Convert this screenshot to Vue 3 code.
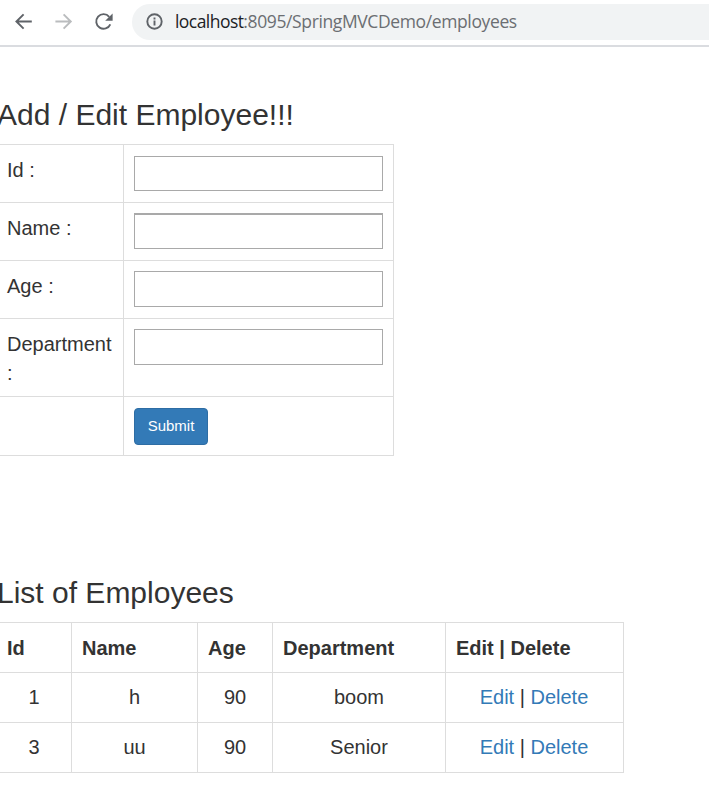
<script setup>
const fields = ['Id :', 'Name :', 'Age :', 'Department :']
const headers = ['Id', 'Name', 'Age', 'Department', 'Edit | Delete']
const employees = [
  { id: 1, name: 'h', age: 90, department: 'boom' },
  { id: 3, name: 'uu', age: 90, department: 'Senior' },
]
</script>

<template>
  <div class="window">
    <header class="toolbar">
      <svg class="nav" viewBox="0 0 24 24"><path d="M19.8 11.5H4.6M11.6 4.3 4.4 11.5l7.2 7.2" /></svg>
      <svg class="nav disabled" viewBox="0 0 24 24"><path d="M3.4 11.5h15.2M11.6 4.3l7.2 7.2-7.2 7.2" /></svg>
      <svg class="nav" viewBox="0 0 24 24">
        <path d="M17.2 6.8A7.3 7.3 0 1 0 18.3 14.3" />
        <path class="solid" d="M20.6 3.6v7.2h-7.4z" />
      </svg>
      <div class="address">
        <svg class="info" viewBox="0 0 18 18">
          <circle cx="8.5" cy="8.5" r="7.2" />
          <path d="M8.5 7.6v4.8M8.5 4.4v2" />
        </svg>
        <span class="url"><span class="host">localhost</span>:8095/SpringMVCDemo/employees</span>
      </div>
    </header>

    <main>
      <h3 class="form-title">Add / Edit Employee!!!</h3>
      <form class="form" @submit.prevent>
        <template v-for="label in fields" :key="label">
          <label class="cell">{{ label }}</label>
          <div class="cell"><input type="text" :aria-label="label" /></div>
        </template>
        <div class="cell"></div>
        <div class="cell"><button type="submit">Submit</button></div>
      </form>

      <h3 class="list-title">List of Employees</h3>
      <div class="list">
        <div v-for="h in headers" :key="h" class="item head">{{ h }}</div>
        <template v-for="e in employees" :key="e.id">
          <div class="item id">{{ e.id }}</div>
          <div class="item">{{ e.name }}</div>
          <div class="item">{{ e.age }}</div>
          <div class="item">{{ e.department }}</div>
          <div class="item actions"><a href="#">Edit</a>&nbsp;|&nbsp;<a href="#">Delete</a></div>
        </template>
      </div>
    </main>
  </div>
</template>

<style>
body { background: #fff; overflow: hidden; }
</style>

<style scoped>
.window {
  height: 795px;
  overflow: hidden;
  font: 20px/29px "Liberation Sans", Arial, sans-serif;
  color: #333;
}
.window * { box-sizing: border-box; }
.toolbar {
  display: flex;
  align-items: center;
  height: 47px;
  padding: 0 0 1px 12px;
  border-bottom: 2px solid #dadce0;
}
.nav {
  flex: none;
  width: 24px;
  height: 24px;
  margin-right: 16px;
  fill: none;
  stroke: #5f6368;
  stroke-width: 1.9;
}
.nav.disabled { stroke: #babcbe; }
.nav .solid { fill: #5f6368; stroke: none; }
.address {
  flex: 1;
  display: flex;
  align-items: center;
  height: 36px;
  padding-left: 14px;
  border-radius: 18px 0 0 18px;
  background: #f1f3f4;
}
.info {
  flex: none;
  width: 18px;
  height: 18px;
  margin-right: 11px;
  fill: none;
  stroke: #5f6368;
  stroke-width: 1.9;
}
.url {
  padding-bottom: 2px;
  font: 17.5px/24px "Open Sans", "Noto Sans", sans-serif;
  letter-spacing: -0.38px;
  color: #6b6e72;
  white-space: nowrap;
}
.host { color: #202124; letter-spacing: -0.55px; }
h3 {
  margin: 0;
  font-size: 30px;
  font-weight: 400;
  line-height: 34px;
  white-space: nowrap;
}
.form-title { padding: 51px 0 12px; margin-left: -3px; }
.list-title { padding: 120px 0 12px; margin-left: -3px; }
.form {
  display: grid;
  grid-template-columns: 124px 270px;
  grid-template-rows: 58px 58px 58px 78px 59px;
  width: 394px;
  border-top: 1px solid #ddd;
}
.cell {
  padding: 11px 10px 0 7px;
  border: solid #ddd;
  border-width: 0 1px 1px 0;
}
.cell:nth-child(even) { padding: 10px 10px 0; }
input {
  display: block;
  width: 249px;
  height: 36px;
  padding: 2px;
  border: 1px solid #a9a9a9;
  border-radius: 0;
  background: #fff;
  outline: none;
}
.cell:nth-child(2) input { height: 35px; margin-top: 1px; }
.cell:nth-child(4) input { border-top-width: 2px; }
button {
  display: block;
  width: 74px;
  height: 37px;
  margin-top: 1px;
  padding: 0 0 2px;
  border: 1px solid #2e6da4;
  border-radius: 4px;
  background: #337ab7;
  color: #fff;
  font: 15px/20px "Liberation Sans", Arial, sans-serif;
}
.list {
  display: grid;
  grid-template-columns: 72px 126px 75px 173px 178px;
  grid-auto-rows: 50px;
  width: 624px;
  border-top: 1px solid #ddd;
}
.item {
  display: flex;
  align-items: center;
  justify-content: center;
  border: solid #ddd;
  border-width: 0 1px 1px 0;
}
.item.id { padding-right: 3px; }
.item.head { justify-content: flex-start; padding: 2px 0 0 10px; font-weight: 700; }
.item.head:first-child { padding-left: 7px; }
.item.actions { padding-right: 1px; }
a { color: #337ab7; text-decoration: none; }
</style>
